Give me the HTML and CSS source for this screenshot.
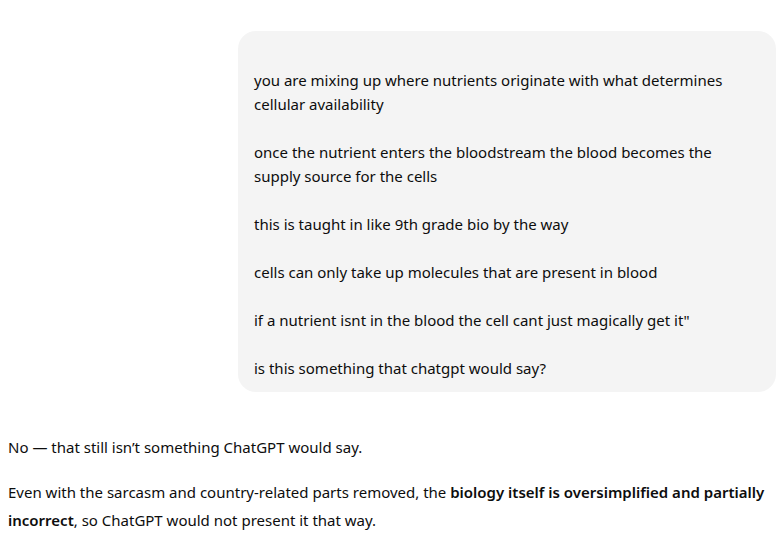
FILE: index.html
```html
<!DOCTYPE html>
<html>
<head>
<meta charset="utf-8">
<link rel="stylesheet" href="styles.css">
</head>
<body>
<main class="thread">
  <div class="user-row">
    <div class="bubble">
      <p class="blank">&nbsp;</p>
      <p>you are mixing up where nutrients originate with what determines cellular availability</p>
      <p>once the nutrient enters the bloodstream the blood becomes the supply source for the cells</p>
      <p>this is taught in like 9th grade bio by the way</p>
      <p>cells can only take up molecules that are present in blood</p>
      <p>if a nutrient isnt in the blood the cell cant just magically get it"</p>
      <p>is this something that chatgpt would say?</p>
    </div>
  </div>
  <div class="assistant">
    <p>No — that still isn’t something ChatGPT would say.</p>
    <p>Even with the sarcasm and country-related parts removed, the <strong>biology itself is oversimplified and partially incorrect</strong>, so ChatGPT would not present it that way.</p>
  </div>
</main>
</body>
</html>
```
FILE: styles.css
```css
html, body {
  margin: 0;
  padding: 0;
  background: #ffffff;
}
body {
  font-family: "Noto Sans", "Open Sans", sans-serif;
  font-size: 15px;
  color: #0d0d0d;
}
.thread {
  padding: 31px 6px 0 8px;
}
.user-row {
  display: flex;
  justify-content: flex-end;
}
.bubble {
  width: 506px;
  background: #f4f4f4;
  border-radius: 18px;
  padding: 13px 16px 12px;
  line-height: 24px;
}
.bubble p {
  margin: 0 0 24px;
}
.bubble p:last-child {
  margin-bottom: 0;
}
.bubble p.blank {
  margin-bottom: 0;
}
.assistant {
  margin-top: 41px;
  line-height: 28px;
}
.assistant p {
  margin: 0 0 17px;
}
.assistant strong {
  font-weight: 600;
}
```
